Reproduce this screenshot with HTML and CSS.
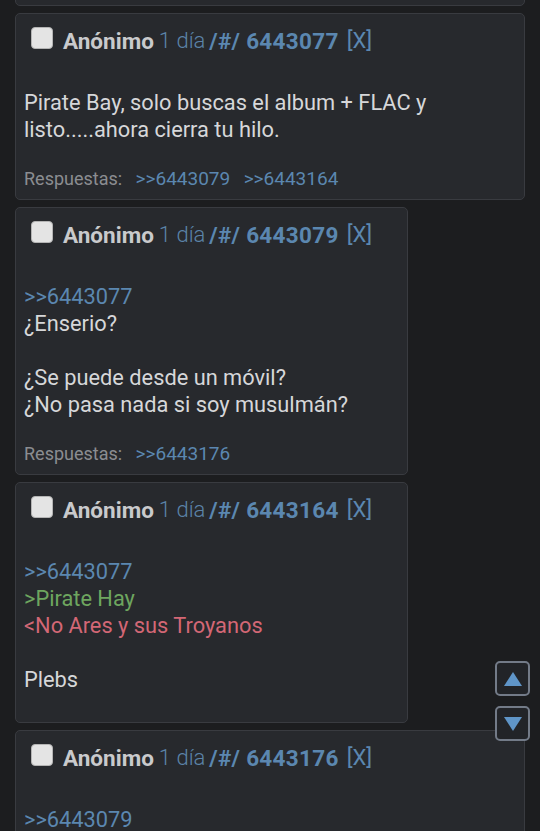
FILE: index.html
```html
<!DOCTYPE html>
<html lang="es">
<head>
<meta charset="utf-8">
<link rel="stylesheet" href="styles.css">
</head>
<body>
<div class="thread">
  <div class="post post-wide post-cut"></div>

  <div class="post post-wide">
    <div class="post-head">
      <span class="check"></span>
      <span class="name">Anónimo</span>
      <span class="date">1 día</span>
      <span class="num">/#/ 6443077</span>
      <span class="del">[X]</span>
    </div>
    <div class="post-body">
      <p>Pirate Bay, solo buscas el album + FLAC y listo.....ahora cierra tu hilo.</p>
    </div>
    <div class="replies">Respuestas: <a class="ref">&gt;&gt;6443079</a> <a class="ref">&gt;&gt;6443164</a></div>
  </div>

  <div class="post post-narrow">
    <div class="post-head">
      <span class="check"></span>
      <span class="name">Anónimo</span>
      <span class="date">1 día</span>
      <span class="num">/#/ 6443079</span>
      <span class="del">[X]</span>
    </div>
    <div class="post-body">
      <p><a class="quote">&gt;&gt;6443077</a><br>¿Enserio?<br><br>¿Se puede desde un móvil?<br>¿No pasa nada si soy musulmán?</p>
    </div>
    <div class="replies">Respuestas: <a class="ref">&gt;&gt;6443176</a></div>
  </div>

  <div class="post post-narrow">
    <div class="post-head">
      <span class="check"></span>
      <span class="name">Anónimo</span>
      <span class="date">1 día</span>
      <span class="num">/#/ 6443164</span>
      <span class="del">[X]</span>
    </div>
    <div class="post-body">
      <p><a class="quote">&gt;&gt;6443077</a><br><span class="green">&gt;Pirate Hay</span><br><span class="red">&lt;No Ares y sus Troyanos</span><br><br>Plebs</p>
    </div>
  </div>

  <div class="post post-wide">
    <div class="post-head">
      <span class="check"></span>
      <span class="name">Anónimo</span>
      <span class="date">1 día</span>
      <span class="num">/#/ 6443176</span>
      <span class="del">[X]</span>
    </div>
    <div class="post-body">
      <p><a class="quote">&gt;&gt;6443079</a><br>Pues sí</p>
    </div>
  </div>
</div>

<div class="nav">
  <button class="nav-btn" aria-label="Arriba"><svg width="18" height="14" viewBox="0 0 18 14"><polygon points="9,0 18,14 0,14" fill="#5f95c8"/></svg></button>
  <button class="nav-btn" aria-label="Abajo"><svg width="18" height="14" viewBox="0 0 18 14"><polygon points="0,0 18,0 9,14" fill="#5f95c8"/></svg></button>
</div>
</body>
</html>
```

FILE: styles.css
```css
html, body {
  margin: 0;
  padding: 0;
  background: #1c1d1f;
  height: 100%;
  overflow: hidden;
}

body {
  font-family: Roboto, "Noto Sans", sans-serif;
  color: #d6d7d9;
}

.thread {
  display: flex;
  flex-direction: column;
  align-items: flex-start;
  gap: 7px;
  padding-left: 15px;
  margin-top: -40px;
}

.post {
  box-sizing: border-box;
  background: #27292d;
  border: 1px solid #393b40;
  border-radius: 5px;
  padding: 12px 8px 9px 8px;
}

.post-cut {
  height: 46px;
}

.post-wide {
  width: 510px;
}

.post-narrow {
  width: 393px;
}

.post-head {
  display: flex;
  align-items: flex-start;
  height: 30px;
  font-size: 22.5px;
  line-height: 30px;
  white-space: nowrap;
}

.check {
  box-sizing: border-box;
  width: 22px;
  height: 22px;
  margin: 1px 10px 0 7px;
  background: #e4e4e4;
  border: 1px solid #b4b4b4;
  border-radius: 4px;
  flex: none;
}

.name {
  font-weight: 700;
  color: #c9cacc;
  margin-right: 5px;
}

.date {
  font-weight: 300;
  color: #5b83a8;
  margin-right: 4px;
  font-size: 22px;
}

.num {
  font-weight: 700;
  color: #5b87b0;
  margin-right: 8px;
  letter-spacing: 0.3px;
}

.del {
  color: #5b87b0;
  font-size: 22px;
}

.post-body {
  margin-top: 33px;
  margin-bottom: 20px;
  font-size: 21.8px;
  line-height: 27px;
}

.post-body p {
  margin: 0;
}

.quote {
  color: #5b87b0;
}

.green {
  color: #6ea65f;
}

.red {
  color: #d36775;
}

.replies {
  padding-top: 5px;
  font-size: 18px;
  line-height: 22px;
  color: #8b8d91;
  word-spacing: 9px;
}

.ref {
  color: #5b87b0;
  word-spacing: 0;
  font-size: 19px;
}

.nav {
  position: fixed;
  right: 10px;
  top: 661px;
  display: flex;
  flex-direction: column;
  gap: 10px;
}

.nav-btn {
  box-sizing: border-box;
  width: 35px;
  height: 35px;
  padding: 0;
  background: #222428;
  border: 2px solid #737b88;
  border-radius: 5px;
  display: flex;
  align-items: center;
  justify-content: center;
}
```
